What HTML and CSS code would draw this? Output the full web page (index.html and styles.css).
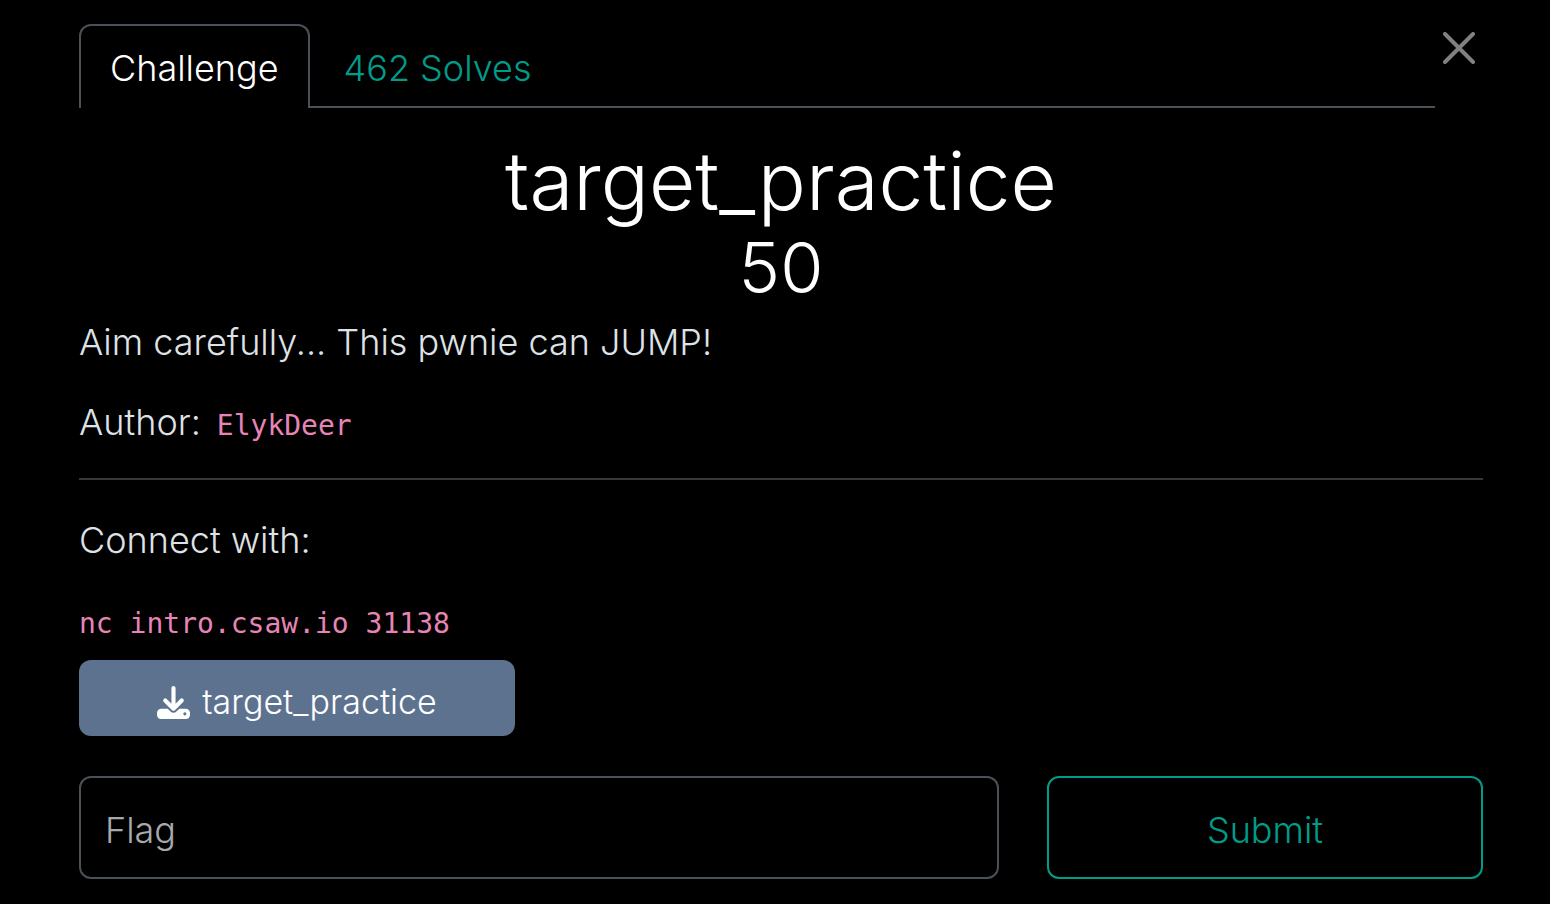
FILE: index.html
```html
<!DOCTYPE html>
<html lang="en">
<head>
  <meta charset="utf-8">
  <meta name="viewport" content="width=device-width, initial-scale=1">
  <title>target_practice</title>
  <link rel="stylesheet" href="styles.css">
</head>
<body>
  <main class="challenge">
    <header class="header">
      <nav class="tabs">
        <a class="tab tab-active" href="#challenge" aria-current="page">Challenge</a>
        <a class="tab" href="#solves">462 Solves</a>
      </nav>
      <button class="close" type="button" aria-label="Close">
        <svg class="close-icon" viewBox="0 0 32 32" aria-hidden="true"><path d="M2 2L30 30M30 2L2 30"/></svg>
      </button>
    </header>

    <h1 class="name">target_practice</h1>
    <h2 class="value">50</h2>

    <section class="description">
      <p class="text">Aim carefully... This pwnie can JUMP!</p>
      <p class="text author">Author: <code class="code">ElykDeer</code></p>
      <hr class="rule">
      <p class="text">Connect with:</p>
      <p class="text connection"><code class="code">nc intro.csaw.io 31138</code></p>
    </section>

    <div class="row">
      <a class="download" href="#target_practice">
        <svg class="download-icon" viewBox="0 0 512 512" aria-hidden="true"><path d="M288 32c0-17.7-14.3-32-32-32s-32 14.3-32 32V274.7l-73.4-73.4c-12.5-12.5-32.8-12.5-45.3 0s-12.5 32.8 0 45.3l128 128c12.5 12.5 32.8 12.5 45.3 0l128-128c12.5-12.5 12.5-32.8 0-45.3s-32.8-12.5-45.3 0L288 274.7V32zM64 352c-35.3 0-64 28.7-64 64v32c0 35.3 28.7 64 64 64H448c35.3 0 64-28.7 64-64V416c0-35.3-28.7-64-64-64H346.5l-45.3 45.3c-25 25-65.5 25-90.5 0L165.5 352H64zm368 56a24 24 0 1 1 0 48 24 24 0 1 1 0-48z"/></svg>
        <span>target_practice</span>
      </a>
    </div>

    <form class="row answer">
      <input class="flag" type="text" placeholder="Flag" aria-label="Flag">
      <button class="submit" type="submit">Submit</button>
    </form>
  </main>
</body>
</html>
```
FILE: styles.css
```css
* {
  box-sizing: border-box;
}

body {
  margin: 0;
  background: #000;
  color: #dee2e6;
  font-family: Inter, "Liberation Sans", sans-serif;
  font-size: 36px;
  font-weight: 300;
  line-height: 48px;
}

.challenge {
  padding: 24px 67px 24px 79px;
}

.header {
  display: flex;
  align-items: flex-start;
}

.tabs {
  display: flex;
  flex: 1;
  border-bottom: 2px solid #495057;
}

.tab {
  margin-bottom: -2px;
  padding: 18px 32px 16px;
  border: 2px solid transparent;
  border-bottom: 0;
  border-radius: 12px 12px 0 0;
  color: #009c8a;
  text-decoration: none;
}

.tab-active {
  padding: 18px 29px 16px;
  border-color: #495057;
  background: #000;
  color: #fff;
}

.close {
  display: flex;
  padding: 8px;
  border: 0;
  background: none;
}

.close-icon {
  width: 32px;
  height: 32px;
  fill: none;
  stroke: #808080;
  stroke-width: 4;
  stroke-linecap: round;
}

.name,
.value {
  margin: 0;
  color: #fff;
  font-weight: 300;
  line-height: 84px;
  text-align: center;
}

.name {
  margin-top: 31px;
  font-size: 80px;
}

.value {
  margin-top: 3px;
  font-size: 70px;
}

.text {
  margin: 0 0 32px;
}

.description {
  padding-top: 8px;
}

.author {
  display: flex;
  align-items: baseline;
  gap: 16px;
}

.code {
  color: #e685b5;
  font-family: "DejaVu Sans Mono", monospace;
  font-size: 28px;
  line-height: 1;
}

.rule {
  margin: 0 0 36px;
  border: 0;
  border-top: 2px solid #373737;
}

.connection {
  margin-bottom: 16px;
}

.row {
  display: grid;
  grid-template-columns: repeat(12, 1fr);
  column-gap: 48px;
}

.download {
  display: flex;
  grid-column: span 4;
  align-items: center;
  justify-content: center;
  gap: 12px;
  padding: 18px 14px 10px;
  border-radius: 12px;
  background: #5d728f;
  color: #fff;
  font-size: 34px;
  text-decoration: none;
}

.download-icon {
  width: 33px;
  height: 33px;
  fill: #fff;
}

.answer {
  margin-top: 40px;
}

.flag,
.submit {
  min-width: 0;
  border: 2px solid #495057;
  border-radius: 12px;
  background: #000;
  font: inherit;
}

.flag {
  grid-column: span 8;
  padding: 28px 24px 23px;
  color: #dee2e6;
}

.flag::placeholder {
  color: #a7aaad;
  opacity: 1;
}

.submit {
  grid-column: span 4;
  padding: 28px 24px 23px;
  border-color: #009c8a;
  color: #009c8a;
}
```
